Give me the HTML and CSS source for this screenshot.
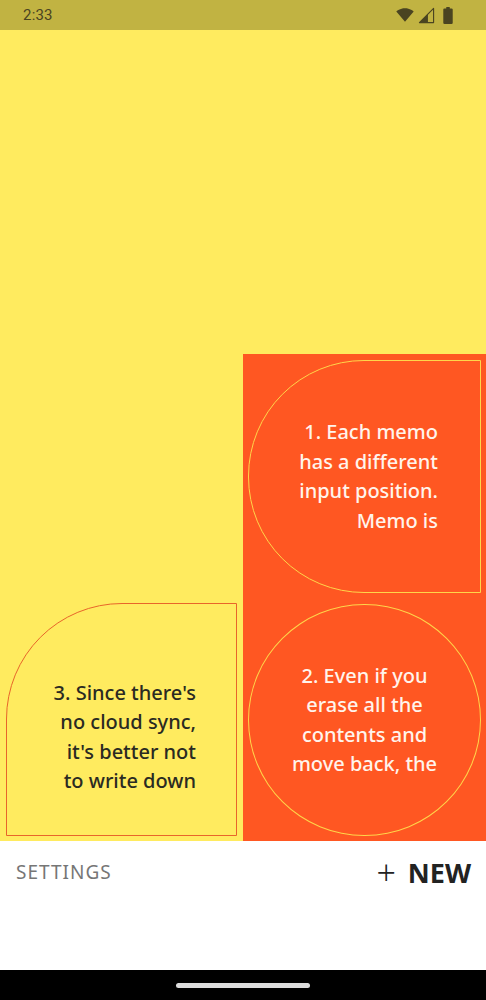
FILE: index.html
```html
<!DOCTYPE html>
<html lang="en">
<head>
<meta charset="utf-8">
<title>Memo</title>
<link rel="stylesheet" href="styles.css">
</head>
<body>
<div class="status">
  <span class="time">2:33</span>
  <div class="sicons">
    <svg class="wifi" viewBox="0 0 24 24" width="18" height="18"><path d="M12 21L23.6 7.2C23.1 6.8 18.6 3 12 3S.9 6.8.4 7.2L12 21z" fill="#4a4421"/></svg>
    <svg class="sig" viewBox="0 0 24 24" width="17" height="17"><path d="M22 22H2L22 2z" fill="none" stroke="#4a4421" stroke-width="1.6" stroke-linejoin="round"/><path d="M2 22h12V10z" fill="#4a4421"/></svg>
    <svg class="bat" viewBox="0 0 10 18" width="10" height="17"><rect x="3" y="0" width="4" height="2" rx=".5" fill="#4a4421"/><rect x="0" y="1.5" width="10" height="16.5" rx="1.3" fill="#4a4421"/></svg>
  </div>
</div>
<main class="board">
  <div class="spacer"></div>
  <div class="cell cell-empty"></div>
  <div class="cell cell-orange">
    <div class="card card-half">
      <p class="txt txt-light txt-right">1. Each memo<br>has a different<br>input position.<br>Memo is</p>
    </div>
  </div>
  <div class="cell cell-yellow">
    <div class="card card-corner">
      <p class="txt txt-dark txt-right">3. Since there's<br>no cloud sync,<br>it's better not<br>to write down</p>
    </div>
  </div>
  <div class="cell cell-orange">
    <div class="card card-circle">
      <p class="txt txt-light txt-center">2. Even if you<br>erase all the<br>contents and<br>move back, the</p>
    </div>
  </div>
</main>
<div class="bottom">
  <div class="bar">
    <span class="settings">SETTINGS</span>
    <span class="new"><span class="plus">+</span>NEW</span>
  </div>
</div>
<div class="nav"><span class="pill"></span></div>
</body>
</html>
```

FILE: styles.css
```css
* { box-sizing: border-box; }
html, body { margin: 0; padding: 0; }
body {
  width: 486px;
  height: 1000px;
  overflow: hidden;
  font-family: "Noto Sans", "Liberation Sans", sans-serif;
  background: #fff;
  display: flex;
  flex-direction: column;
}
.status {
  height: 30px;
  background: #c1b342;
  display: flex;
  align-items: center;
  justify-content: space-between;
  padding: 0 33px 0 23px;
}
.time {
  font-family: Roboto, "Liberation Sans", sans-serif;
  font-size: 15px;
  color: #4a4421;
  letter-spacing: 0.2px;
}
.sicons { display: flex; align-items: center; gap: 4px; }
.sicons .sig { margin-right: 4px; }
.board {
  background: #ffeb5f;
  display: grid;
  grid-template-columns: 243px 243px;
  grid-template-rows: 324px 243.5px 243.5px;
}
.spacer { grid-column: 1 / 3; }
.cell { padding: 6px 5px 5px; display: flex; }
.cell-orange { background: #ff5722; }
.cell-yellow { background: #ffeb5f; padding: 5.5px 6px 5.5px 6px; }
.card {
  flex: 1;
  display: flex;
  flex-direction: column;
  justify-content: center;
}
.card-half {
  border: 1px solid #ffd54a;
  border-radius: 116px 0 0 116px;
  padding-right: 42px;
}
.card-circle {
  border: 1px solid #ffd54a;
  border-radius: 50%;
  align-items: center;
}
.card-corner {
  border: 1px solid #e8652a;
  border-top-left-radius: 116px;
  padding-right: 40px;
  padding-top: 35px;
}
.txt {
  margin: 0;
  font-size: 20px;
  font-weight: 500;
  line-height: 29.6px;
}
.txt-light { color: #fff4ec; }
.txt-dark { color: #2a2a22; }
.txt-right { text-align: right; }
.txt-center { text-align: center; }
.bottom { flex: 1; background: #fff; }
.bar {
  height: 62px;
  display: flex;
  align-items: center;
  justify-content: space-between;
  padding: 0 15px 0 16px;
}
.settings {
  font-size: 19px;
  color: #767676;
  letter-spacing: 1px;
}
.new {
  font-size: 27px;
  font-weight: 700;
  color: #222;
  letter-spacing: 0;
  display: flex;
  align-items: center;
}
.plus {
  font-weight: 300;
  font-size: 34px;
  margin-right: 12px;
  line-height: 1;
}
.nav {
  height: 30px;
  background: #000;
  display: flex;
  justify-content: center;
  align-items: center;
}
.pill {
  width: 134px;
  height: 5px;
  border-radius: 3px;
  background: #dcdcdc;
}
```
